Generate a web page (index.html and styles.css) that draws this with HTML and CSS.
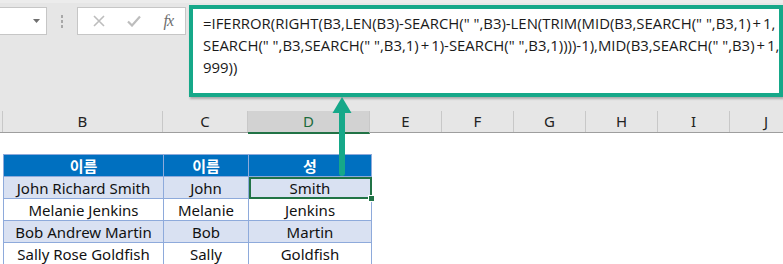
FILE: index.html
```html
<!DOCTYPE html>
<html lang="ko">
<head>
<meta charset="utf-8">
<link rel="stylesheet" href="styles.css">
</head>
<body>
<div class="screen">
  <div class="top">
    <div class="namebox">
      <svg class="dd" width="7" height="4" viewBox="0 0 7 4"><path d="M0 0h7L3.5 4z" fill="#6f6f6f"/></svg>
    </div>
    <div class="dots"><i></i><i></i><i></i></div>
    <div class="buttons">
      <svg class="btn" width="12" height="12" viewBox="0 0 12 12"><path d="M1 1L11 11M11 1L1 11" stroke="#bdbdbd" stroke-width="1.6"/></svg>
      <svg class="btn" width="14" height="12" viewBox="0 0 14 12"><path d="M1 6.5L5 10.5L13 1.5" stroke="#bdbdbd" stroke-width="2.2" fill="none"/></svg>
      <span class="fx">fx</span>
    </div>
    <div class="formula">
      <div class="fline">=IFERROR(RIGHT(B3,LEN(B3)-SEARCH(" ",B3)-LEN(TRIM(MID(B3,SEARCH(" ",B3,1)<span class="op">+</span>1,</div>
      <div class="fline">SEARCH(" ",B3,SEARCH(" ",B3,1)<span class="op">+</span>1)-SEARCH(" ",B3,1))))-1),MID(B3,SEARCH(" ",B3)<span class="op">+</span>1,</div>
      <div class="fline">999))</div>
    </div>
  </div>
  <div class="colheads">
    <div class="ch edge"></div>
    <div class="ch">B</div>
    <div class="ch">C</div>
    <div class="ch active">D</div>
    <div class="ch">E</div>
    <div class="ch">F</div>
    <div class="ch">G</div>
    <div class="ch">H</div>
    <div class="ch">I</div>
    <div class="ch">J</div>
  </div>
  <div class="sheet">
    <table class="data">
      <tr class="head"><th class="cb">이름</th><th class="cc">이름</th><th class="cd">성</th></tr>
      <tr class="band"><td>John Richard Smith</td><td>John</td><td class="sel">Smith<span class="handle"></span></td></tr>
      <tr><td>Melanie Jenkins</td><td>Melanie</td><td>Jenkins</td></tr>
      <tr class="band"><td>Bob Andrew Martin</td><td>Bob</td><td>Martin</td></tr>
      <tr><td>Sally Rose Goldfish</td><td>Sally</td><td>Goldfish</td></tr>
    </table>
  </div>
  <svg class="arrow" width="22" height="80" viewBox="0 0 22 80"><path d="M11 0L20.5 16H1.5z" fill="#16a889"/><path d="M11 14V76" stroke="#16a889" stroke-width="6" stroke-linecap="round"/></svg>
</div>
</body>
</html>
```
FILE: styles.css
```css
html, body { margin: 0; padding: 0; }
body { width: 783px; height: 264px; overflow: hidden; background: #fff; font-family: "Noto Sans", "Noto Sans CJK KR", sans-serif; }
.screen { position: relative; width: 783px; height: 264px; overflow: hidden; }
.top { height: 111px; background: #e6e6e6; display: flex; align-items: flex-start; box-sizing: border-box; border-top: 3px solid #ececec; }
.namebox { margin-top: 4px; width: 47px; height: 28px; box-sizing: border-box; background: #fff; border: 1px solid #c6c6c6; border-left: none; position: relative; }
.dd { position: absolute; left: 33px; top: 11px; }
.dots { width: 30px; margin-top: 12px; display: flex; flex-direction: column; align-items: center; gap: 2px; }
.dots i { display: block; width: 2px; height: 3px; background: #a8a8a8; }
.buttons { margin-top: 4px; width: 110px; height: 28px; box-sizing: border-box; background: #fff; border: 1px solid #c6c6c6; display: flex; align-items: center; padding-left: 15px; gap: 22px; }
.fx { font-family: "Liberation Serif", serif; font-style: italic; font-size: 16px; color: #6e6e6e; margin-left: 1px; letter-spacing: -1px; }
.formula { margin-left: 3px; margin-top: 2px; width: 594px; height: 92px; box-sizing: border-box; border: 4px solid #16a889; background: #fff; box-shadow: 1px 2px 2px rgba(0,0,0,0.25); padding: 3px 0 0 10px; font-family: "Open Sans", sans-serif; font-size: 14.9px; color: #1a1a1a; }
.fline { height: 22px; line-height: 22px; white-space: pre; }
.op { margin: 0 2px; }
.colheads { display: grid; grid-template-columns: 3px 160px 85px 122px 72px 72px 72px 72px 72px 72px; height: 22px; background: #e6e6e6; border-bottom: 1px solid #9e9e9e; box-sizing: border-box; }
.ch { border-right: 1px solid #c8c8c8; text-align: center; line-height: 21px; font-size: 15px; color: #222; font-family: "Noto Sans", sans-serif; }
.ch:last-child { border-right: none; padding-left: 0; }
.ch.active { background: #d2d2d2; color: #1d6b3c; border-bottom: 2px solid #217346; margin-bottom: -2px; }
.sheet { padding: 21px 0 0 3px; }
.data { border-collapse: collapse; table-layout: fixed; font-size: 15px; }
.data th, .data td { height: 22px; padding: 0; border: 1px solid #8eaadb; text-align: center; line-height: 20px; box-sizing: border-box; color: #111; white-space: nowrap; }
.data th { background: #0070c0; color: #fff; font-weight: bold; font-family: "Noto Sans CJK KR", sans-serif; font-size: 15px; border-color: #8eaadb; }
.cb { width: 160px; }
.cc { width: 85px; }
.cd { width: 123px; }
.band td { background: #d9e1f2; }
.data td.sel { position: relative; outline: 2px solid #217346; outline-offset: -2px; }
.handle { position: absolute; right: -4px; bottom: -4px; width: 5px; height: 5px; background: #217346; border: 1px solid #fff; }
.arrow { position: absolute; left: 331px; top: 97px; }
```
